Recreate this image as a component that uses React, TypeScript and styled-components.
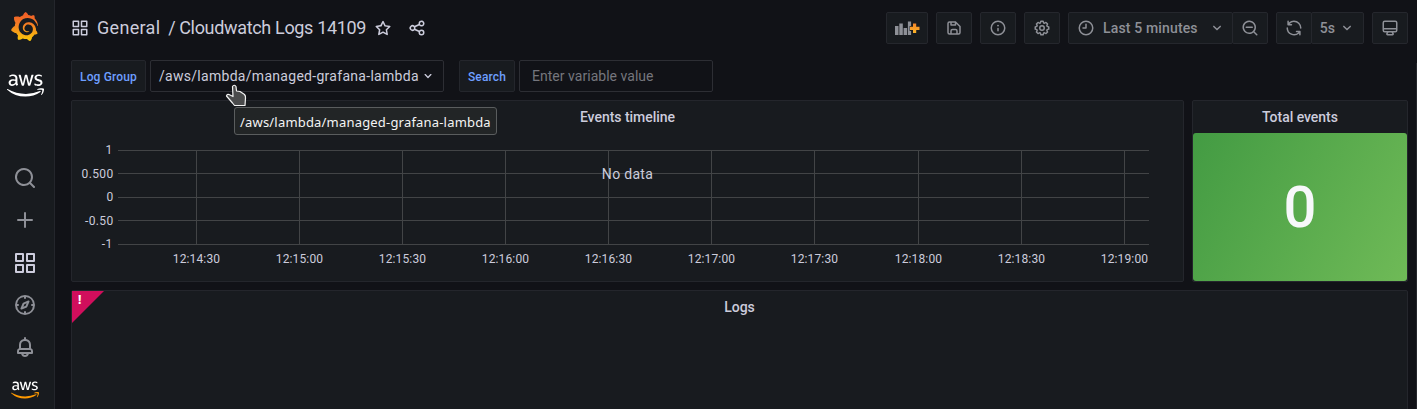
import React from 'react';
import styled, { createGlobalStyle } from 'styled-components';
import { FaAws } from 'react-icons/fa';
import { SiGrafana } from 'react-icons/si';

const GlobalStyle = createGlobalStyle`
  * { box-sizing: border-box; }
  html, body, #root { height: 100%; }
  body {
    margin: 0;
    overflow: hidden;
    background: #111217;
    color: #ccccdc;
    font-family: Roboto, "Liberation Sans", sans-serif;
    font-size: 14px;
    line-height: 22px;
    letter-spacing: 0.01071em;
  }
`;

const icons = {
  search:
    'M21.71,20.29,18,16.61A9,9,0,1,0,16.61,18l3.68,3.68a1,1,0,0,0,1.42,0A1,1,0,0,0,21.71,20.29ZM11,18a7,7,0,1,1,7-7A7,7,0,0,1,11,18Z',
  plus: 'M19,11H13V5a1,1,0,0,0-2,0v6H5a1,1,0,0,0,0,2h6v6a1,1,0,0,0,2,0V13h6a1,1,0,0,0,0-2Z',
  apps: 'M10,13H3a1,1,0,0,0-1,1v7a1,1,0,0,0,1,1h7a1,1,0,0,0,1-1V14A1,1,0,0,0,10,13ZM9,20H4V15H9ZM21,2H14a1,1,0,0,0-1,1v7a1,1,0,0,0,1,1h7a1,1,0,0,0,1-1V3A1,1,0,0,0,21,2ZM20,9H15V4h5Zm1,4H14a1,1,0,0,0-1,1v7a1,1,0,0,0,1,1h7a1,1,0,0,0,1-1V14A1,1,0,0,0,21,13Zm-1,7H15V15h5ZM10,2H3A1,1,0,0,0,2,3v7a1,1,0,0,0,1,1h7a1,1,0,0,0,1-1V3A1,1,0,0,0,10,2ZM9,9H4V4H9Z',
  compass:
    'M12,2A10,10,0,1,0,22,12,10,10,0,0,0,12,2Zm1,17.93V19a1,1,0,0,0-2,0v.93A8,8,0,0,1,4.07,13H5a1,1,0,0,0,0-2H4.07A8,8,0,0,1,11,4.07V5a1,1,0,0,0,2,0V4.07A8,8,0,0,1,19.93,11H19a1,1,0,0,0,0,2h.93A8,8,0,0,1,13,19.93ZM15.14,7.55l-5,2.12a1,1,0,0,0-.52.52l-2.12,5a1,1,0,0,0,.21,1.1,1,1,0,0,0,.7.3.93.93,0,0,0,.4-.09l5-2.12a1,1,0,0,0,.52-.52l2.12-5a1,1,0,0,0-1.31-1.31Zm-2.49,5.1-2.28,1,1-2.28,2.28-1Z',
  bell: 'M18,13.18V10a6,6,0,0,0-5-5.91V3a1,1,0,0,0-2,0V4.09A6,6,0,0,0,6,10v3.18A3,3,0,0,0,4,16v2a1,1,0,0,0,1,1H8.14a4,4,0,0,0,7.72,0H19a1,1,0,0,0,1-1V16A3,3,0,0,0,18,13.18ZM8,10a4,4,0,0,1,8,0v3H8Zm4,10a2,2,0,0,1-1.72-1h3.44A2,2,0,0,1,12,20Zm6-3H6V16a1,1,0,0,1,1-1H17a1,1,0,0,1,1,1Z',
  star: 'M22,9.67A1,1,0,0,0,21.14,9l-5.69-.83L12.9,3a1,1,0,0,0-1.8,0L8.55,8.16,2.86,9a1,1,0,0,0-.81.68,1,1,0,0,0,.25,1l4.13,4-1,5.68A1,1,0,0,0,6.9,21.44L12,18.77l5.1,2.67a.93.93,0,0,0,.46.12,1,1,0,0,0,.59-.19,1,1,0,0,0,.4-1l-1-5.68,4.13-4A1,1,0,0,0,22,9.67Zm-6.15,4a1,1,0,0,0-.29.88l.72,4.2-3.76-2a1.06,1.06,0,0,0-.94,0l-3.76,2,.72-4.2a1,1,0,0,0-.29-.88l-3-3,4.21-.61a1,1,0,0,0,.76-.55L12,5.7l1.88,3.82a1,1,0,0,0,.76.55l4.21.61Z',
  share:
    'M18,14a4,4,0,0,0-3.08,1.48l-5.1-2.35a3.64,3.64,0,0,0,0-2.26l5.1-2.35A4,4,0,1,0,14,6a4.17,4.17,0,0,0,.07.71L8.79,9.14a4,4,0,1,0,0,5.72l5.28,2.43A4.17,4.17,0,0,0,14,18a4,4,0,1,0,4-4ZM18,4a2,2,0,1,1-2,2A2,2,0,0,1,18,4ZM6,14a2,2,0,1,1,2-2A2,2,0,0,1,6,14Zm12,6a2,2,0,1,1,2-2A2,2,0,0,1,18,20Z',
  save: 'M20.71,9.29l-6-6a1,1,0,0,0-.32-.21A1.09,1.09,0,0,0,14,3H6A3,3,0,0,0,3,6V18a3,3,0,0,0,3,3H18a3,3,0,0,0,3-3V10A1,1,0,0,0,20.71,9.29ZM9,5h4V7H9Zm6,14H9V16a1,1,0,0,1,1-1h4a1,1,0,0,1,1,1Zm4-1a1,1,0,0,1-1,1H17V16a3,3,0,0,0-3-3H10a3,3,0,0,0-3,3v3H6a1,1,0,0,1-1-1V6A1,1,0,0,1,6,5H7V8A1,1,0,0,0,8,9h6a1,1,0,0,0,1-1V6.41l4,4Z',
  info: 'M12,2A10,10,0,1,0,22,12,10,10,0,0,0,12,2Zm0,18a8,8,0,1,1,8-8A8,8,0,0,1,12,20Zm0-8.5a1,1,0,0,0-1,1v3a1,1,0,0,0,2,0v-3A1,1,0,0,0,12,11.5Zm0-4a1.25,1.25,0,1,0,1.25,1.25A1.25,1.25,0,0,0,12,7.5Z',
  cog: 'M21.32,9.55l-1.89-.63.89-1.78A1,1,0,0,0,20.13,6L18,3.87a1,1,0,0,0-1.15-.19l-1.78.89-.63-1.89A1,1,0,0,0,13.5,2h-3a1,1,0,0,0-.95.68L8.92,4.57,7.14,3.68A1,1,0,0,0,6,3.87L3.87,6a1,1,0,0,0-.19,1.15l.89,1.78-1.89.63A1,1,0,0,0,2,10.5v3a1,1,0,0,0,.68.95l1.89.63-.89,1.78A1,1,0,0,0,3.87,18L6,20.13a1,1,0,0,0,1.15.19l1.78-.89.63,1.89a1,1,0,0,0,.95.68h3a1,1,0,0,0,.95-.68l.63-1.89,1.78.89A1,1,0,0,0,18,20.13L20.13,18a1,1,0,0,0,.19-1.15l-.89-1.78,1.89-.63A1,1,0,0,0,22,13.5v-3A1,1,0,0,0,21.32,9.55ZM20,12.78l-1.2.4A2,2,0,0,0,17.64,16l.57,1.14-1.1,1.1L16,17.64a2,2,0,0,0-2.79,1.16l-.4,1.2H11.22l-.4-1.2A2,2,0,0,0,8,17.64l-1.14.57-1.1-1.1L6.36,16A2,2,0,0,0,5.2,13.18L4,12.78V11.22l1.2-.4A2,2,0,0,0,6.36,8L5.79,6.89l1.1-1.1L8,6.36A2,2,0,0,0,10.82,5.2l.4-1.2h1.56l.4,1.2A2,2,0,0,0,16,6.36l1.14-.57,1.1,1.1L17.64,8a2,2,0,0,0,1.16,2.79l1.2.4ZM12,8a4,4,0,1,0,4,4A4,4,0,0,0,12,8Zm0,6a2,2,0,1,1,2-2A2,2,0,0,1,12,14Z',
  clock:
    'M12,2A10,10,0,1,0,22,12,10,10,0,0,0,12,2Zm0,18a8,8,0,1,1,8-8A8,8,0,0,1,12,20ZM12,6a1,1,0,0,0-1,1v4H8a1,1,0,0,0,0,2h4a1,1,0,0,0,1-1V7A1,1,0,0,0,12,6Z',
  angleDown:
    'M17,9.17a1,1,0,0,0-1.41,0L12,12.71,8.46,9.17a1,1,0,0,0-1.41,0,1,1,0,0,0,0,1.42l4.24,4.24a1,1,0,0,0,1.42,0L17,10.59A1,1,0,0,0,17,9.17Z',
  zoomOut:
    'M21.71,20.29,18,16.61A9,9,0,1,0,16.61,18l3.68,3.68a1,1,0,0,0,1.42,0A1,1,0,0,0,21.71,20.29ZM11,18a7,7,0,1,1,7-7A7,7,0,0,1,11,18Zm4-8H7a1,1,0,0,0,0,2h8a1,1,0,0,0,0-2Z',
  sync: 'M19.91,15.51H15.38a1,1,0,0,0,0,2h2.4A8,8,0,0,1,4,12a1,1,0,1,0-2,0,10,10,0,0,0,16.88,7.23V21a1,1,0,0,0,2,0V16.5A1,1,0,0,0,19.91,15.51ZM12,2A10,10,0,0,0,5.12,4.77V3a1,1,0,0,0-2,0V7.5a1,1,0,0,0,1,1h4.5a1,1,0,0,0,0-2H6.22A8,8,0,0,1,20,12a1,1,0,0,0,2,0A10,10,0,0,0,12,2Z',
  monitor:
    'M19,2H5A3,3,0,0,0,2,5V15a3,3,0,0,0,3,3H7.64l-.58,1a2,2,0,0,0,0,2,2,2,0,0,0,1.75,1h6.46A2,2,0,0,0,17,21a2,2,0,0,0,0-2l-.59-1H19a3,3,0,0,0,3-3V5A3,3,0,0,0,19,2ZM8.77,20,10,18H14l1.2,2ZM20,15a1,1,0,0,1-1,1H5a1,1,0,0,1-1-1V14H20Zm0-3H4V5A1,1,0,0,1,5,4H19a1,1,0,0,1,1,1Z',
};

const IconSvg = styled.svg`
  display: block;
  flex: none;
  fill: currentColor;
`;

function Icon({ name, size = 18 }: { name: keyof typeof icons; size?: number }) {
  return (
    <IconSvg width={size} height={size} viewBox="0 0 24 24">
      <path d={icons[name]} />
    </IconSvg>
  );
}

const Page = styled.div`
  display: flex;
  height: 409px;
  overflow: hidden;
`;

const Sidebar = styled.nav`
  flex: none;
  display: flex;
  flex-direction: column;
  width: 55px;
  padding: 8px 4px 0 0;
  background: #181b1f;
  border-right: 1px solid #24262c;
  > * { flex: none; }
`;

const GrafanaLink = styled.a`
  display: flex;
  justify-content: center;
  align-items: center;
  height: 37px;
  padding-right: 1px;
  svg { fill: url(#grafana-fill); }
`;

const AwsLogo = styled.a<{ $size: number; $height: number; $smile?: boolean }>`
  display: flex;
  justify-content: center;
  align-items: center;
  height: ${(p) => p.$height}px;
  color: #ffffff;
  svg {
    flex: none;
    width: ${(p) => p.$size}px;
    height: ${(p) => p.$size}px;
    ${(p) => p.$smile && 'fill: url(#aws-fill);'}
  }
`;

const NavSpacer = styled.div`
  height: 31px;
`;

const NavItem = styled.a<{ $active?: boolean }>`
  display: flex;
  justify-content: center;
  align-items: center;
  height: 42.25px;
  color: ${(p) => (p.$active ? '#ccccdc' : '#8e9097')};
`;

const GradientDefs = styled.svg`
  position: absolute;
  width: 0;
  height: 0;
`;

const Main = styled.main`
  flex: 1;
  min-width: 0;
  padding: 12px 9px 0 16px;
`;

const Toolbar = styled.header`
  display: flex;
  align-items: center;
  gap: 8px;
  height: 32px;
`;

const Breadcrumb = styled.div`
  flex: 1;
  display: flex;
  align-items: center;
  font-size: 18px;
`;

const Folder = styled.span`
  margin-left: 8px;
  letter-spacing: 0.3px;
`;

const DashboardTitle = styled.span`
  margin: 0 8px 0 8px;
  letter-spacing: -0.33px;
  white-space: pre;
`;

const Slash = styled.span`
  letter-spacing: -0.5px;
`;

const TitleAction = styled.span`
  margin-right: 16px;
`;

const ButtonGroup = styled.div`
  display: flex;
`;

const ToolButton = styled.button<{ $width: number; $joined?: boolean }>`
  display: flex;
  align-items: center;
  justify-content: center;
  width: ${(p) => p.$width}px;
  height: 32px;
  padding: 0;
  ${(p) => p.$joined && 'margin-left: -1px;'}
  background: #181b1f;
  border: 1px solid #25272d;
  border-radius: 2px;
  color: #8e9097;
  font: 500 14px/22px Roboto, sans-serif;
  letter-spacing: 0.15px;
`;

const RangeButton = styled(ToolButton)`
  justify-content: flex-start;
  padding-left: 8px;
`;

const ButtonText = styled.span<{ $left: number; $right: number }>`
  margin: 0 ${(p) => p.$right}px 0 ${(p) => p.$left}px;
`;

const Filters = styled.section`
  display: flex;
  height: 32px;
  margin: 16px 0 8px;
`;

const FilterLabel = styled.label<{ $width: number }>`
  display: flex;
  align-items: center;
  justify-content: center;
  width: ${(p) => p.$width}px;
  margin-right: 4px;
  padding-top: 1px;
  background: #181b1f;
  border: 1px solid #24262c;
  border-radius: 2px;
  color: #6e9fff;
  font-size: 12px;
  font-weight: 500;
`;

const FilterSelect = styled.div`
  display: flex;
  align-items: center;
  width: 294px;
  margin-right: 15px;
  padding-left: 8px;
  border: 1px solid #2d2e34;
  border-radius: 2px;
  letter-spacing: 0.29px;
  white-space: nowrap;
  svg { margin-left: 1px; }
`;

const FilterInput = styled.input`
  width: 194px;
  padding: 0 12px;
  background: transparent;
  border: 1px solid #2d2e34;
  border-radius: 2px;
  font: 400 14px/22px Roboto, sans-serif;
  letter-spacing: 0.03px;
  &::placeholder { color: #75767d; opacity: 1; }
`;

const PanelRow = styled.div`
  display: flex;
  gap: 8px;
  margin-bottom: 8px;
`;

const Panel = styled.section<{ $width?: number; $height: number }>`
  position: relative;
  display: flex;
  flex-direction: column;
  ${(p) => (p.$width ? `width: ${p.$width}px;` : 'flex: 1;')}
  height: ${(p) => p.$height}px;
  background: #181b1f;
  border: 1px solid #24262c;
  border-radius: 2px;
`;

const PanelTitle = styled.h2`
  flex: none;
  height: 32px;
  margin: 0;
  font-size: 14px;
  font-weight: 500;
  line-height: 32px;
  letter-spacing: -0.03px;
  text-align: center;
`;

const Stat = styled.div`
  flex: 1;
  display: flex;
  align-items: center;
  justify-content: center;
  border-radius: 3px;
  background: linear-gradient(120deg, #439b43, #6fba57);
  color: #f7f8fa;
  font-size: 58px;
  font-weight: 500;
  letter-spacing: 0;
`;

const ErrorCorner = styled.div`
  position: absolute;
  top: 0;
  left: 0;
  width: 32px;
  height: 32px;
  padding-left: 6px;
  background: #d10e5c;
  clip-path: polygon(0 0, 100% 0, 0 100%);
  color: #fff;
  font: 900 12px/18px Roboto, sans-serif;
`;

const Chart = styled.svg`
  display: block;
  text {
    fill: #ccccdc;
    font-size: 12px;
    letter-spacing: 0.13px;
  }
  .tick { letter-spacing: 0.35px; }
  .nodata { font-size: 14px; letter-spacing: 0.3px; }
  line { stroke: #424446; shape-rendering: crispEdges; }
`;

const Tooltip = styled.div`
  position: absolute;
  left: 234px;
  top: 107px;
  width: 263px;
  height: 28px;
  padding-left: 5px;
  background: #222526;
  border: 1px solid #5a5d5e;
  border-radius: 3px;
  color: #f4f4f4;
  font: 400 13px/28px "Noto Sans", sans-serif;
  letter-spacing: 0.19px;
  white-space: nowrap;
`;

const Pointer = styled.svg`
  position: absolute;
  left: 224px;
  top: 83px;
`;

const ScrollThumb = styled.div`
  position: absolute;
  top: 63px;
  right: 0;
  bottom: 0;
  width: 1px;
  background: #25272c;
`;

const yTicks = [
  { label: '1', y: 18, text: 21, end: 40.5 },
  { label: '0.500', y: 41, text: 45, end: 41.5 },
  { label: '0', y: 65, text: 68, end: 41.5 },
  { label: '-0.50', y: 88, text: 92, end: 41.5 },
  { label: '-1', y: 112, text: 115, end: 40.5 },
];

const xTicks = [
  { label: '12:14:30', x: 124 },
  { label: '12:15:00', x: 227 },
  { label: '12:15:30', x: 330 },
  { label: '12:16:00', x: 433 },
  { label: '12:16:30', x: 536 },
  { label: '12:17:00', x: 639 },
  { label: '12:17:30', x: 742 },
  { label: '12:18:00', x: 846 },
  { label: '12:18:30', x: 949 },
  { label: '12:19:00', x: 1052 },
];

function TimelineChart() {
  return (
    <Chart width="1111" height="148">
      {yTicks.map((t) => (
        <g key={t.label}>
          <line x1="46" x2="1077" y1={t.y - 0.5} y2={t.y - 0.5} />
          <text className="tick" x={t.end} y={t.text} textAnchor="end">
            {t.label}
          </text>
        </g>
      ))}
      {xTicks.map((t) => (
        <g key={t.label}>
          <line x1={t.x + 0.5} x2={t.x + 0.5} y1="17" y2="111" />
          <text x={t.x + 0.5} y="130" textAnchor="middle">
            {t.label}
          </text>
        </g>
      ))}
      <text className="nodata" x="555.5" y="46" textAnchor="middle">
        No data
      </text>
    </Chart>
  );
}

function AddPanelIcon() {
  return (
    <svg width="25" height="14" viewBox="0 0 25 14">
      <g fill="#8e9097">
        <path d="M0 5h3.500v9H0zM4.300 2.500h3.500V14h-3.500zM8.600 7h3.500v7H8.600zM12.900 0.500h3.200v4.500h-1.500v5h1.500V14h-3.200z" />
      </g>
      <path d="M18 2.500h3.200v3.200h3.300v3.200h-3.300V12H18V8.900h-3V5.700h3z" fill="url(#add-fill)" />
    </svg>
  );
}

export default function App() {
  return (
    <Page>
      <GlobalStyle />
      <GradientDefs aria-hidden="true">
        <defs>
          <linearGradient id="grafana-fill" x1="0" y1="0" x2="0" y2="1">
            <stop offset="0" stopColor="#f05a28" />
            <stop offset="0.4" stopColor="#f37a24" />
            <stop offset="1" stopColor="#fbca0a" />
          </linearGradient>
          <linearGradient id="aws-fill" gradientUnits="userSpaceOnUse" x1="0" y1="0" x2="0" y2="512">
            <stop offset="0.6" stopColor="#ffffff" />
            <stop offset="0.6" stopColor="#ff9900" />
          </linearGradient>
          <linearGradient id="add-fill" x1="0" y1="0" x2="0" y2="1">
            <stop offset="0" stopColor="#f5852a" />
            <stop offset="1" stopColor="#fbb428" />
          </linearGradient>
        </defs>
      </GradientDefs>

      <Sidebar>
        <GrafanaLink>
          <SiGrafana size={29} />
        </GrafanaLink>
        <AwsLogo $size={37} $height={81}>
          <FaAws />
        </AwsLogo>
        <NavSpacer />
        <NavItem>
          <Icon name="search" size={24} />
        </NavItem>
        <NavItem>
          <Icon name="plus" size={24} />
        </NavItem>
        <NavItem $active>
          <Icon name="apps" size={24} />
        </NavItem>
        <NavItem>
          <Icon name="compass" size={24} />
        </NavItem>
        <NavItem>
          <Icon name="bell" size={24} />
        </NavItem>
        <AwsLogo $size={28} $height={43} $smile>
          <FaAws />
        </AwsLogo>
      </Sidebar>

      <Main>
        <Toolbar>
          <Breadcrumb>
            <Icon name="apps" />
            <Folder>General</Folder>
            <DashboardTitle>
              <Slash>/ </Slash>Cloudwatch Logs 14109
            </DashboardTitle>
            <TitleAction>
              <Icon name="star" />
            </TitleAction>
            <Icon name="share" />
          </Breadcrumb>
          <ToolButton $width={42}>
            <AddPanelIcon />
          </ToolButton>
          <ToolButton $width={36}>
            <Icon name="save" />
          </ToolButton>
          <ToolButton $width={36}>
            <Icon name="info" />
          </ToolButton>
          <ToolButton $width={36}>
            <Icon name="cog" />
          </ToolButton>
          <ButtonGroup>
            <RangeButton $width={165}>
              <Icon name="clock" />
              <ButtonText $left={8} $right={10}>
                Last 5 minutes
              </ButtonText>
              <Icon name="angleDown" />
            </RangeButton>
            <ToolButton $width={36} $joined>
              <Icon name="zoomOut" />
            </ToolButton>
          </ButtonGroup>
          <ButtonGroup>
            <ToolButton $width={36}>
              <Icon name="sync" />
            </ToolButton>
            <ToolButton $width={53} $joined>
              <ButtonText $left={1} $right={3}>
                5s
              </ButtonText>
              <Icon name="angleDown" />
            </ToolButton>
          </ButtonGroup>
          <ToolButton $width={36}>
            <Icon name="monitor" />
          </ToolButton>
        </Toolbar>

        <Filters>
          <FilterLabel $width={75}>Log Group</FilterLabel>
          <FilterSelect>
            /aws/lambda/managed-grafana-lambda
            <Icon name="angleDown" size={16} />
          </FilterSelect>
          <FilterLabel $width={56}>Search</FilterLabel>
          <FilterInput placeholder="Enter variable value" />
        </Filters>

        <PanelRow>
          <Panel $height={182}>
            <PanelTitle>Events timeline</PanelTitle>
            <TimelineChart />
          </Panel>
          <Panel $width={216} $height={182}>
            <PanelTitle>Total events</PanelTitle>
            <Stat>0</Stat>
          </Panel>
        </PanelRow>
        <PanelRow>
          <Panel $height={200}>
            <ErrorCorner>!</ErrorCorner>
            <PanelTitle>Logs</PanelTitle>
          </Panel>
        </PanelRow>
      </Main>

      <ScrollThumb />
      <Tooltip>/aws/lambda/managed-grafana-lambda</Tooltip>
      <Pointer width="24" height="25" viewBox="0 0 24 25">
        <path
          d="M8.500 3.500Q10 1 12 3.500L12.500 8L16 8.500L20.500 11.500Q21.800 13 21.500 15L21 22.500H10.500L8.500 20L2.500 13Q3 10.800 5 11.500L9 13.500Z"
          fill="#4a4b4c"
          stroke="#f2f2f2"
          strokeWidth="1.2"
          strokeLinejoin="round"
        />
      </Pointer>
    </Page>
  );
}
